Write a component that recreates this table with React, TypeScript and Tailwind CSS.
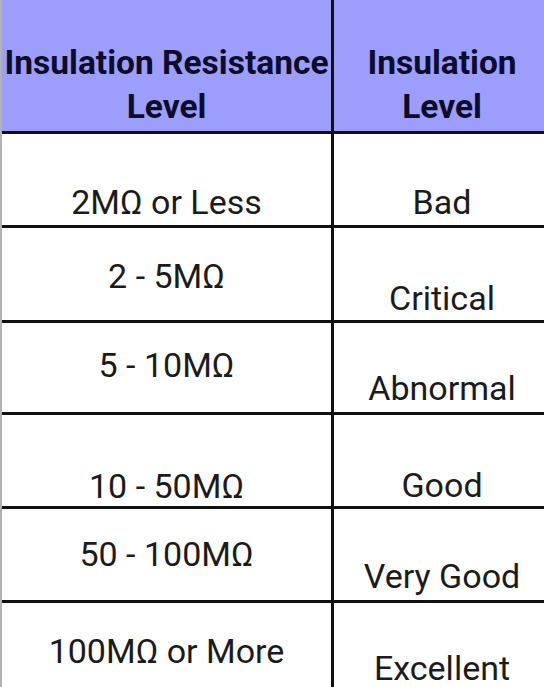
import React from "react";

interface Row {
  resistance: string;
  level: string;
  h: string;
  padL: string;
  padR: string;
}

const rows: Row[] = [
  { resistance: "2MΩ or Less", level: "Bad", h: "h-[94px]", padL: "pt-[49px]", padR: "pt-[49px]" },
  { resistance: "2 - 5MΩ", level: "Critical", h: "h-[95px]", padL: "pt-[29px]", padR: "pt-[51px]" },
  { resistance: "5 - 10MΩ", level: "Abnormal", h: "h-[92px]", padL: "pt-[23px]", padR: "pt-[46px]" },
  { resistance: "10 - 50MΩ", level: "Good", h: "h-[94px]", padL: "pt-[52px]", padR: "pt-[51px]" },
  { resistance: "50 - 100MΩ", level: "Very Good", h: "h-[94px]", padL: "pt-[26px]", padR: "pt-[48px]" },
  { resistance: "100MΩ or More", level: "Excellent", h: "h-[84px]", padL: "pt-[29px]", padR: "pt-[48px]" },
];

export default function App() {
  return (
    <div
      className="w-[544px] h-[687px] overflow-hidden bg-white border-l-2 border-black/30"
      style={{ fontFamily: "Roboto, 'Liberation Sans', sans-serif" }}
    >
      {/* header */}
      <div className="grid grid-cols-[332px_1fr] h-[134px] bg-[#9d9dfb] border-b-[3px] border-[#111]">
        <div className="border-r-[3px] border-[#111] pt-[41px] text-center text-[33.5px] leading-[44px] font-bold text-[#0c0c2c] whitespace-nowrap">
          Insulation Resistance
          <br />
          Level
        </div>
        <div className="pt-[41px] pl-[6px] text-center text-[33.5px] leading-[44px] font-bold text-[#0c0c2c]">
          Insulation
          <br />
          Level
        </div>
      </div>

      {rows.map((row, i) => (
        <div
          key={row.resistance}
          className={`grid grid-cols-[332px_1fr] ${row.h} ${i < rows.length - 1 ? "border-b-[3px] border-[#111]" : ""}`}
        >
          <div className={`border-r-[3px] border-[#111] ${row.padL} text-center text-[34px] leading-[38px] text-[#1b1b1b] whitespace-nowrap`}>
            {row.resistance}
          </div>
          <div
            className={`${row.padR} pl-[6px] text-center text-[34px] ${
              i === rows.length - 1 ? "leading-[34px]" : "leading-[38px]"
            } text-[#1b1b1b] whitespace-nowrap`}
          >
            {row.level}
          </div>
        </div>
      ))}
    </div>
  );
}
